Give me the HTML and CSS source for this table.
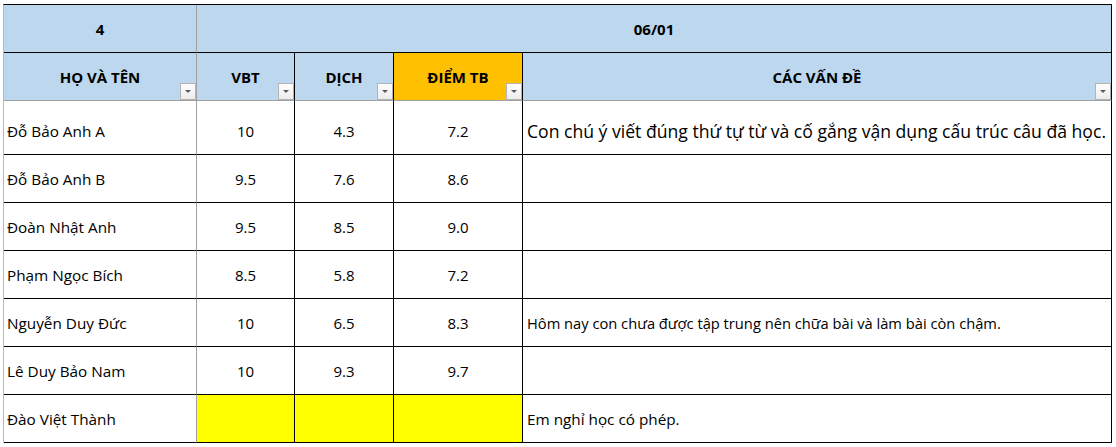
FILE: index.html
```html
<!DOCTYPE html>
<html lang="vi">
<head>
<meta charset="utf-8">
<title>Bảng điểm</title>
<link rel="stylesheet" href="styles.css">
</head>
<body>
<table class="sheet">
  <colgroup>
    <col class="w-name">
    <col class="w-vbt">
    <col class="w-dich">
    <col class="w-avg">
    <col class="w-note">
  </colgroup>
  <thead>
    <tr class="row-top">
      <th class="cell first">4</th>
      <th class="cell grayleft last" colspan="4">06/01</th>
    </tr>
    <tr class="row-head">
      <th class="cell first">HỌ VÀ TÊN<span class="filter"></span></th>
      <th class="cell">VBT<span class="filter"></span></th>
      <th class="cell">DỊCH<span class="filter"></span></th>
      <th class="cell orange">ĐIỂM TB<span class="filter"></span></th>
      <th class="cell last">CÁC VẤN ĐỀ<span class="filter"></span></th>
    </tr>
  </thead>
  <tbody>
    <tr class="row-data tall">
      <td class="cell first name">Đỗ Bảo Anh A</td>
      <td class="cell num">10</td>
      <td class="cell num">4.3</td>
      <td class="cell num">7.2</td>
      <td class="cell last note big">Con chú ý viết đúng thứ tự từ và cố gắng vận dụng cấu trúc câu đã học.</td>
    </tr>
    <tr class="row-data">
      <td class="cell first name">Đỗ Bảo Anh B</td>
      <td class="cell num">9.5</td>
      <td class="cell num">7.6</td>
      <td class="cell num">8.6</td>
      <td class="cell last note"></td>
    </tr>
    <tr class="row-data">
      <td class="cell first name">Đoàn Nhật Anh</td>
      <td class="cell num">9.5</td>
      <td class="cell num">8.5</td>
      <td class="cell num">9.0</td>
      <td class="cell last note"></td>
    </tr>
    <tr class="row-data">
      <td class="cell first name">Phạm Ngọc Bích</td>
      <td class="cell num">8.5</td>
      <td class="cell num">5.8</td>
      <td class="cell num">7.2</td>
      <td class="cell last note"></td>
    </tr>
    <tr class="row-data">
      <td class="cell first name">Nguyễn Duy Đức</td>
      <td class="cell num">10</td>
      <td class="cell num">6.5</td>
      <td class="cell num">8.3</td>
      <td class="cell last note small">Hôm nay con chưa được tập trung nên chữa bài và làm bài còn chậm.</td>
    </tr>
    <tr class="row-data">
      <td class="cell first name">Lê Duy Bảo Nam</td>
      <td class="cell num">10</td>
      <td class="cell num">9.3</td>
      <td class="cell num">9.7</td>
      <td class="cell last note"></td>
    </tr>
    <tr class="row-data">
      <td class="cell first name">Đào Việt Thành</td>
      <td class="cell num yellow"></td>
      <td class="cell num yellow"></td>
      <td class="cell num yellow"></td>
      <td class="cell last note">Em nghỉ học có phép.</td>
    </tr>
  </tbody>
</table>
</body>
</html>
```
FILE: styles.css
```css
html, body {
  margin: 0;
  padding: 0;
  background: #ffffff;
}

body {
  padding: 4px 0 0 3px;
  font-family: "Open Sans", "Noto Sans", sans-serif;
  color: #000000;
}

.sheet {
  border-collapse: separate;
  border-spacing: 0;
  table-layout: fixed;
  width: 1109px;
  border-top: 1px solid #000000;
  border-left: 1px solid #b8b8b8;
}

.w-name { width: 193px; }
.w-vbt { width: 98px; }
.w-dich { width: 99px; }
.w-avg { width: 129px; }
.w-note { width: 589px; }

.cell {
  box-sizing: border-box;
  border-right: 1px solid #000000;
  border-bottom: 1px solid #000000;
  padding: 0 3px;
  font-size: 15px;
  line-height: 20px;
  white-space: nowrap;
  overflow: hidden;
}

.cell.first {
  border-right-color: #a0a0a0;
}

thead .cell {
  background: #bdd7ee;
  font-weight: 700;
  text-align: center;
  vertical-align: middle;
  position: relative;
  overflow: visible;
}

thead .cell.orange {
  background: #ffc000;
}

.row-top .cell {
  height: 48px;
}

.row-head .cell {
  height: 48px;
  border-bottom-color: #a0a0a0;
}

.row-data .cell {
  height: 48px;
  vertical-align: bottom;
  padding-bottom: 13px;
}

.row-data.tall .cell {
  height: 54px;
}

.name {
  text-align: left;
  padding-left: 3px;
  font-size: 15.3px;
}

.num {
  text-align: center;
}

.note {
  text-align: left;
  padding-left: 4px;
  font-size: 15.3px;
}

.note.big {
  font-size: 17.6px;
}

.note.small {
  font-size: 14.7px;
}

.yellow {
  background: #ffff00;
}

.filter {
  position: absolute;
  right: 0;
  bottom: 0;
  width: 16px;
  height: 17px;
  box-sizing: border-box;
  border: 1px solid #b4b4b4;
  background: linear-gradient(#ffffff, #ececec);
}

.filter::after {
  content: "";
  position: absolute;
  left: 4px;
  top: 6px;
  border-left: 3px solid transparent;
  border-right: 3px solid transparent;
  border-top: 3px solid #5a5a5a;
}
```
